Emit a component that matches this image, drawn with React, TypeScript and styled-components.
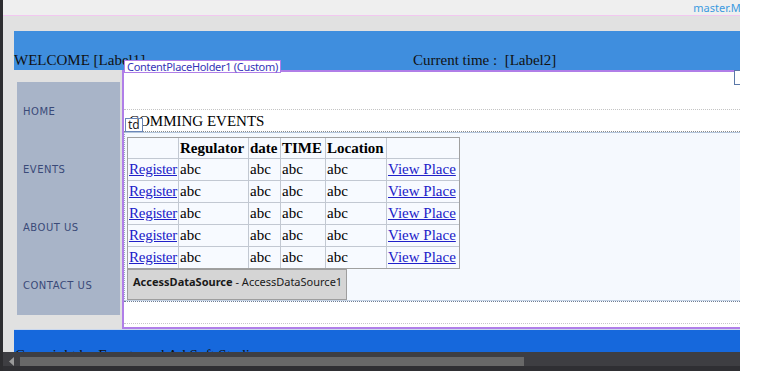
import React from 'react';
import styled, { createGlobalStyle } from 'styled-components';

const GlobalStyle = createGlobalStyle`
  html, body {
    margin: 0;
    padding: 0;
  }
  body {
    background: #ffffff;
    font-family: "Liberation Serif", "Times New Roman", serif;
  }
`;

const Window = styled.div`
  display: flex;
  width: 761px;
  height: 371px;
  overflow: hidden;
  background: #ffffff;
`;

const EdgeStrip = styled.div`
  width: 3px;
  flex-shrink: 0;
  background: #2d2d30;
`;

const Workspace = styled.div`
  display: flex;
  flex-direction: column;
  width: 737px;
  flex-shrink: 0;
  overflow: hidden;
`;

const RightGutter = styled.div`
  flex: 1;
  background: #ffffff;
`;

const DocBar = styled.div`
  height: 15px;
  flex-shrink: 0;
  display: flex;
  justify-content: flex-end;
  align-items: center;
  background: #efefef;
  border-bottom: 1px solid #f2c8f0;
`;

const FileName = styled.span`
  margin-right: -27px;
  font-family: "Noto Sans", "DejaVu Sans", sans-serif;
  font-size: 11px;
  line-height: 13px;
  color: #3c9ae0;
  white-space: nowrap;
`;

const Surface = styled.div`
  flex: 1;
  min-height: 0;
  overflow: hidden;
  padding: 15px 0 0 11px;
  background: #e1e1e1;
`;

const Page = styled.div`
  width: 760px;
  font-size: 15px;
  color: #000;
`;

const Header = styled.div`
  display: flex;
  align-items: flex-end;
  box-sizing: border-box;
  height: 39px;
  padding-bottom: 1px;
  background: #3f8ede;
  color: #111;
  line-height: 18px;
`;

const HeaderCell = styled.div<{ $width?: number }>`
  width: ${p => (p.$width ? `${p.$width}px` : 'auto')};
  white-space: nowrap;
`;

const Body = styled.div`
  display: flex;
  align-items: flex-start;
  gap: 2px;
  padding-left: 3px;
`;

const Nav = styled.nav`
  display: flex;
  flex-direction: column;
  width: 103px;
  margin-top: 12px;
  padding-bottom: 1px;
  background: #a8b4c8;
`;

const NavItem = styled.a`
  display: flex;
  align-items: center;
  height: 58px;
  padding-left: 6px;
  font-family: "DejaVu Sans", Verdana, sans-serif;
  font-size: 10px;
  letter-spacing: 0.5px;
  color: #3a4a78;
  text-decoration: none;
`;

const ContentHolder = styled.div`
  position: relative;
  flex: 1;
  padding-bottom: 3px;
  border: 2px solid #b07ee8;
  background: #ffffff;
`;

const HolderTag = styled.div`
  position: absolute;
  left: 0;
  top: -12px;
  height: 11px;
  padding: 0 2px;
  border: 1px solid #b07ee8;
  background: #ffffff;
  font-family: "Noto Sans", "DejaVu Sans", sans-serif;
  font-size: 11px;
  line-height: 11px;
  letter-spacing: -0.3px;
  color: #3636b8;
  white-space: nowrap;
`;

const CornerHandle = styled.div`
  position: absolute;
  left: 610px;
  top: -2px;
  width: 6px;
  height: 13px;
  background: #ffffff;
  border: 1px solid #5a78a8;
`;

const TopSpacer = styled.div`
  height: 37px;
  border-bottom: 1px dotted #c4c4c4;
`;

const TitleRow = styled.div`
  position: relative;
  height: 19px;
  padding: 2px 0 0 5px;
  line-height: 19px;
  border-bottom: 1px dotted #8a8a8a;
  white-space: nowrap;
`;

const TdTag = styled.span`
  position: absolute;
  left: 1px;
  top: 8px;
  height: 12px;
  padding: 0 2px;
  border: 1px solid #6a86b8;
  background: #ffffff;
  font-family: "Noto Sans", "DejaVu Sans", sans-serif;
  font-size: 12px;
  line-height: 12px;
  color: #222;
`;

const GridCell = styled.div`
  padding: 4px 0 0 2px;
  background: #f5f9fe;
  border-top: 1px solid #b4c6dc;
  border-left: 1px dotted #9aa8c0;
  border-bottom: 1px solid #c4d2e4;
`;

const EventsTable = styled.table`
  border-collapse: separate;
  border-spacing: 0;
  table-layout: fixed;
  width: 333px;
  border: 1px solid #a0a0a0;
  background: #f7faff;
  font-size: 15px;
`;

const Col = styled.col<{ $w: number }>`
  width: ${p => p.$w}px;
`;

const HeadCell = styled.th`
  padding: 0 0 0 1px;
  line-height: 20px;
  text-align: left;
  font-weight: bold;
  white-space: nowrap;
  border-right: 1px solid #c2c8d2;
  border-bottom: 1px solid #c2c8d2;
  &:last-child {
    border-right: none;
  }
`;

const Cell = styled.td`
  padding: 0 0 0 1px;
  line-height: 21px;
  white-space: nowrap;
  overflow: visible;
  border-right: 1px solid #c2c8d2;
  border-bottom: 1px solid #c2c8d2;
  &:last-child {
    border-right: none;
  }
  tr:last-child > & {
    border-bottom: none;
  }
`;

const Link = styled.a<{ $tight?: boolean }>`
  color: #2020c8;
  text-decoration: underline;
  letter-spacing: ${p => (p.$tight ? '-0.25px' : 'normal')};
`;

const DataSourceBox = styled.div`
  box-sizing: border-box;
  width: 220px;
  height: 31px;
  padding: 5px 0 0 5px;
  border: 1px solid #9e9e9e;
  background: #d5d5d5;
  font-family: "Noto Sans", "DejaVu Sans", sans-serif;
  font-size: 11px;
  line-height: 14px;
  color: #1a1a1a;
  white-space: nowrap;
`;

const BottomSpacer = styled.div`
  height: 21px;
  border-top: 1px dotted #6e7e96;
  border-bottom: 1px dotted #c8c8c8;
`;

const Footer = styled.div`
  height: 40px;
  padding: 16px 0 0 1px;
  background: #1668dc;
  border-top: 1px solid #c9d7ee;
  color: #111;
  line-height: 18px;
  white-space: nowrap;
`;

const HScrollbar = styled.div`
  display: flex;
  align-items: stretch;
  box-sizing: border-box;
  height: 19px;
  flex-shrink: 0;
  padding-top: 5px;
  background: #3e3e42;
  border-bottom: 5px solid #2f2f33;
`;

const ArrowButton = styled.div`
  display: flex;
  align-items: center;
  justify-content: center;
  width: 17px;
`;

const Thumb = styled.div`
  width: 504px;
  background: #686868;
`;

const navLinks = ['HOME', 'EVENTS', 'ABOUT US', 'CONTACT US'];
const rows = [1, 2, 3, 4, 5];
const colWidths = [51, 70, 32, 45, 61, 72];

function App() {
  return (
    <>
      <GlobalStyle />
      <Window>
        <EdgeStrip />
        <Workspace>
          <DocBar>
            <FileName>master.Master</FileName>
          </DocBar>
          <Surface>
            <Page>
              <Header>
                <HeaderCell $width={399}>WELCOME [Label1]</HeaderCell>
                <HeaderCell>Current time :&nbsp; [Label2]</HeaderCell>
              </Header>
              <Body>
                <Nav>
                  {navLinks.map(label => (
                    <NavItem key={label} href="#">{label}</NavItem>
                  ))}
                </Nav>
                <ContentHolder>
                  <HolderTag>ContentPlaceHolder1 (Custom)</HolderTag>
                  <CornerHandle />
                  <TopSpacer />
                  <TitleRow>
                    COMMING EVENTS
                    <TdTag>td</TdTag>
                  </TitleRow>
                  <GridCell>
                    <EventsTable>
                      <colgroup>
                        {colWidths.map((w, i) => (
                          <Col key={i} $w={w} />
                        ))}
                      </colgroup>
                      <thead>
                        <tr>
                          <HeadCell />
                          <HeadCell>Regulator</HeadCell>
                          <HeadCell>date</HeadCell>
                          <HeadCell>TIME</HeadCell>
                          <HeadCell>Location</HeadCell>
                          <HeadCell />
                        </tr>
                      </thead>
                      <tbody>
                        {rows.map(r => (
                          <tr key={r}>
                            <Cell><Link href="#" $tight>Register</Link></Cell>
                            <Cell>abc</Cell>
                            <Cell>abc</Cell>
                            <Cell>abc</Cell>
                            <Cell>abc</Cell>
                            <Cell><Link href="#">View Place</Link></Cell>
                          </tr>
                        ))}
                      </tbody>
                    </EventsTable>
                    <DataSourceBox>
                      <b>AccessDataSource</b> - AccessDataSource1
                    </DataSourceBox>
                  </GridCell>
                  <BottomSpacer />
                </ContentHolder>
              </Body>
              <Footer>Copyright by Events and Ad Soft Studio</Footer>
            </Page>
          </Surface>
          <HScrollbar>
            <ArrowButton>
              <svg width="5" height="9" viewBox="0 0 5 9">
                <polygon points="5,0 0,4.5 5,9" fill="#9a9a9a" />
              </svg>
            </ArrowButton>
            <Thumb />
          </HScrollbar>
        </Workspace>
        <RightGutter />
      </Window>
    </>
  );
}

export default App;
